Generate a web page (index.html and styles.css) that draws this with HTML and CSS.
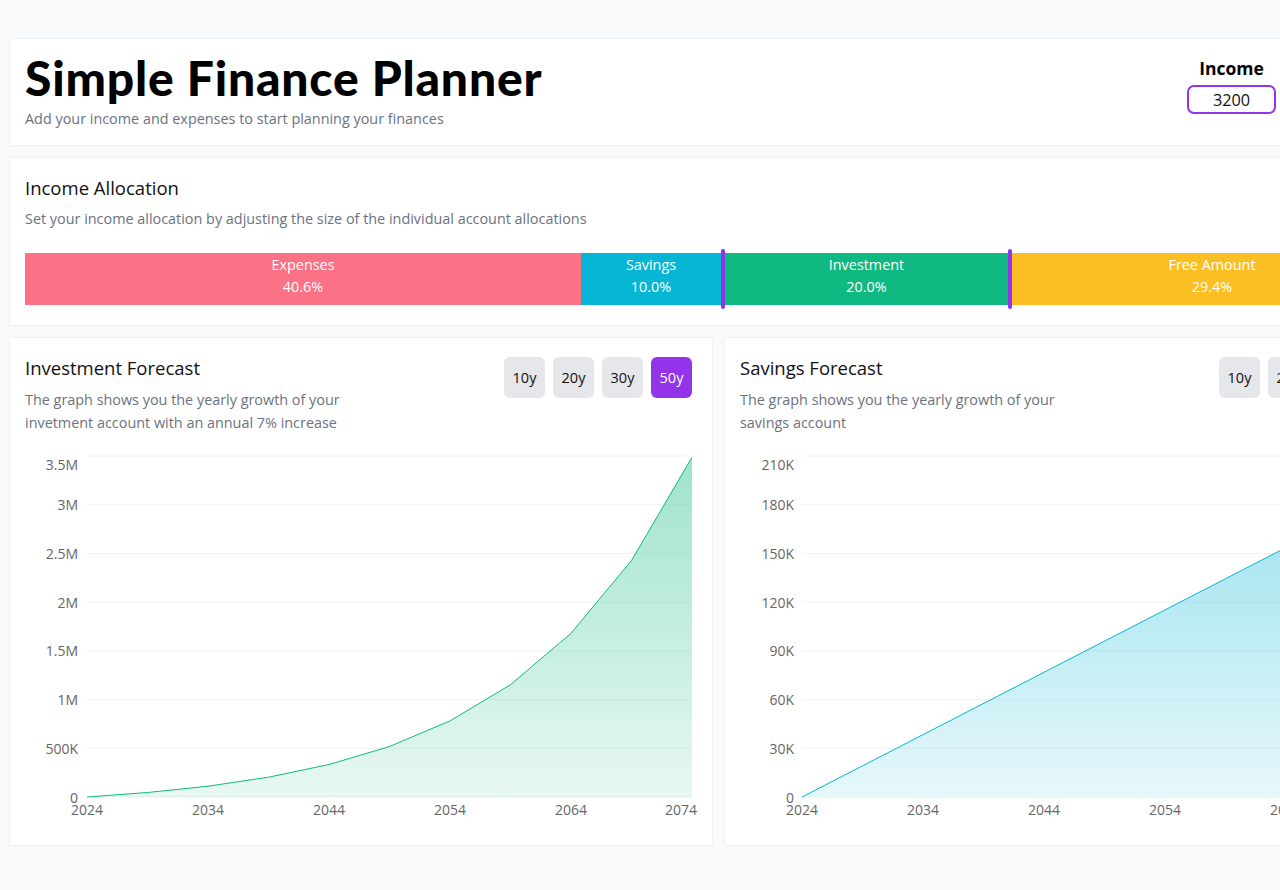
FILE: index.html
```html
<!DOCTYPE html>
<html lang="en">
<head>
<meta charset="utf-8">
<title>Simple Finance Planner</title>
<link rel="stylesheet" href="styles.css">
</head>
<body>
<div class="page">
  <header class="card header">
    <div class="titles">
      <h1 class="title">Simple Finance Planner</h1>
      <p class="subtitle">Add your income and expenses to start planning your finances</p>
    </div>
    <div class="income">
      <label class="income-label" for="income">Income</label>
      <input id="income" class="income-input" type="text" value="3200">
    </div>
  </header>

  <section class="card allocation">
    <h2 class="card-title">Income Allocation</h2>
    <p class="card-desc">Set your income allocation by adjusting the size of the individual account allocations</p>
    <div class="bar">
      <div class="seg seg-expenses" style="flex-basis:556px"><span>Expenses</span><span>40.6%</span></div>
      <div class="seg seg-savings" style="flex-basis:140px"><span>Savings</span><span>10.0%</span></div>
      <div class="handle"></div>
      <div class="seg seg-investment" style="flex-basis:283px"><span>Investment</span><span>20.0%</span></div>
      <div class="handle"></div>
      <div class="seg seg-free" style="flex-basis:400px"><span>Free Amount</span><span>29.4%</span></div>
    </div>
  </section>

  <div class="forecasts">
    <section class="card forecast">
      <div class="forecast-head">
        <div class="forecast-text">
          <h2 class="card-title">Investment Forecast</h2>
          <p class="card-desc forecast-desc">The graph shows you the yearly growth of your invetment account with an annual 7% increase</p>
        </div>
        <div class="ranges">
          <button class="range">10y</button>
          <button class="range">20y</button>
          <button class="range">30y</button>
          <button class="range active">50y</button>
        </div>
      </div>
      <svg class="chart" width="667" height="390" viewBox="0 0 667 390">
        <defs>
          <linearGradient id="gInv" x1="0" y1="0" x2="0" y2="1">
            <stop offset="0%" stop-color="#10b981" stop-opacity="0.4"/>
            <stop offset="100%" stop-color="#10b981" stop-opacity="0.1"/>
          </linearGradient>
        </defs>
        <g class="grid">
          <line x1="62" x2="667" y1="16" y2="16"/>
          <line x1="62" x2="667" y1="64.7" y2="64.7"/>
          <line x1="62" x2="667" y1="113.4" y2="113.4"/>
          <line x1="62" x2="667" y1="162.1" y2="162.1"/>
          <line x1="62" x2="667" y1="210.9" y2="210.9"/>
          <line x1="62" x2="667" y1="259.6" y2="259.6"/>
          <line x1="62" x2="667" y1="308.3" y2="308.3"/>
          <line x1="62" x2="667" y1="357" y2="357"/>
        </g>
        <path class="area-inv" d="M62,357 L122.5,352.5 L183,346.2 L243.5,337.2 L304,324.5 L364.5,306.5 L425,280.9 L485.5,244.7 L546,193.3 L606.5,120.5 L667,17.3 L667,357 Z"/>
        <path class="line-inv" d="M62,357 L122.5,352.5 L183,346.2 L243.5,337.2 L304,324.5 L364.5,306.5 L425,280.9 L485.5,244.7 L546,193.3 L606.5,120.5 L667,17.3"/>
        <g class="ylabels">
          <text x="53" y="30">3.5M</text>
          <text x="53" y="70.2">3M</text>
          <text x="53" y="118.9">2.5M</text>
          <text x="53" y="167.6">2M</text>
          <text x="53" y="216.4">1.5M</text>
          <text x="53" y="265.1">1M</text>
          <text x="53" y="313.8">500K</text>
          <text x="53" y="362.5">0</text>
        </g>
        <g class="xlabels">
          <text x="62" y="375">2024</text>
          <text x="183" y="375">2034</text>
          <text x="304" y="375">2044</text>
          <text x="425" y="375">2054</text>
          <text x="546" y="375">2064</text>
          <text x="656" y="375">2074</text>
        </g>
      </svg>
    </section>

    <section class="card forecast">
      <div class="forecast-head">
        <div class="forecast-text">
          <h2 class="card-title">Savings Forecast</h2>
          <p class="card-desc forecast-desc">The graph shows you the yearly growth of your savings account</p>
        </div>
        <div class="ranges">
          <button class="range">10y</button>
          <button class="range">20y</button>
          <button class="range">30y</button>
          <button class="range active">50y</button>
        </div>
      </div>
      <svg class="chart" width="667" height="390" viewBox="0 0 667 390">
        <defs>
          <linearGradient id="gSav" x1="0" y1="0" x2="0" y2="1">
            <stop offset="0%" stop-color="#06b6d4" stop-opacity="0.4"/>
            <stop offset="100%" stop-color="#06b6d4" stop-opacity="0.1"/>
          </linearGradient>
        </defs>
        <g class="grid">
          <line x1="62" x2="667" y1="16" y2="16"/>
          <line x1="62" x2="667" y1="64.7" y2="64.7"/>
          <line x1="62" x2="667" y1="113.4" y2="113.4"/>
          <line x1="62" x2="667" y1="162.1" y2="162.1"/>
          <line x1="62" x2="667" y1="210.9" y2="210.9"/>
          <line x1="62" x2="667" y1="259.6" y2="259.6"/>
          <line x1="62" x2="667" y1="308.3" y2="308.3"/>
          <line x1="62" x2="667" y1="357" y2="357"/>
        </g>
        <path class="area-sav" d="M62,357 L667,45.2 L667,357 Z"/>
        <path class="line-sav" d="M62,357 L667,45.2"/>
        <g class="ylabels">
          <text x="54" y="30">210K</text>
          <text x="54" y="70.2">180K</text>
          <text x="54" y="118.9">150K</text>
          <text x="54" y="167.6">120K</text>
          <text x="54" y="216.4">90K</text>
          <text x="54" y="265.1">60K</text>
          <text x="54" y="313.8">30K</text>
          <text x="54" y="362.5">0</text>
        </g>
        <g class="xlabels">
          <text x="62" y="375">2024</text>
          <text x="183" y="375">2034</text>
          <text x="304" y="375">2044</text>
          <text x="425" y="375">2054</text>
          <text x="546" y="375">2064</text>
          <text x="656" y="375">2074</text>
        </g>
      </svg>
    </section>
  </div>
</div>
</body>
</html>
```

FILE: styles.css
```css
* { box-sizing: border-box; }

html, body {
  margin: 0;
  padding: 0;
  background: #f9fafb;
}

body {
  font-family: "Open Sans", "Noto Sans", "Liberation Sans", sans-serif;
  color: #111;
  font-size: 14.4px;
}

.page {
  width: 1437px;
  padding: 39px 10px 40px;
  display: flex;
  flex-direction: column;
  gap: 13px;
}

.card {
  background: #fff;
  box-shadow: 0 0 0 1px #f1f2f4, 0 1px 2px rgba(0, 0, 0, 0.04);
}

/* header */
.header {
  display: flex;
  justify-content: space-between;
  align-items: flex-start;
  padding: 15px 15px 16px;
}

.title {
  margin: 0;
  font-family: "Lato", "Open Sans", sans-serif;
  font-size: 48px;
  line-height: 48px;
  font-weight: 900;
  color: #000;
  letter-spacing: 0.8px;
}

.subtitle {
  margin: 7px 0 0;
  font-size: 14.4px;
  line-height: 20px;
  color: #6b7280;
}

.income {
  display: flex;
  flex-direction: column;
  align-items: center;
  width: 89px;
  margin-right: 136px;
}

.income-label {
  font-size: 17.5px;
  line-height: 28px;
  font-weight: 700;
  color: #000;
}

.income-input {
  margin-top: 3px;
  width: 89px;
  height: 29px;
  border: 2px solid #9333ea;
  border-radius: 7px;
  text-align: center;
  font-family: inherit;
  font-size: 16.3px;
  color: #111;
  padding: 0;
  outline: none;
  background: #fff;
}

/* allocation */
.allocation {
  padding: 16px 15px 20px;
}

.card-title {
  margin: 0;
  font-size: 18.5px;
  line-height: 28px;
  font-weight: 500;
  color: #111;
}

.card-desc {
  margin: 7px 0 0;
  font-size: 14.4px;
  line-height: 20px;
  color: #6b7280;
}

.bar {
  margin-top: 24px;
  display: flex;
  height: 52px;
}

.seg {
  flex-grow: 0;
  flex-shrink: 0;
  display: flex;
  flex-direction: column;
  align-items: center;
  padding-top: 1px;
  color: #fff;
  font-size: 14.4px;
  line-height: 22px;
}

.seg-expenses { background: #fb7185; }
.seg-savings { background: #06b6d4; }
.seg-investment { background: #10b981; }
.seg-free { background: #fbbf24; }

.handle {
  flex: 0 0 4px;
  margin: -4px 0;
  background: #9333ea;
  border-radius: 2px;
}

/* forecasts */
.forecasts {
  display: grid;
  grid-template-columns: 702px 702px;
  gap: 13px;
}

.forecast {
  padding: 16px 20px 15px 15px;
}

.forecast-head {
  display: flex;
  justify-content: space-between;
  align-items: flex-start;
}

.forecast-desc {
  width: 340px;
  margin-top: 6px;
  line-height: 23px;
}

.ranges {
  display: flex;
  gap: 8px;
  margin-top: 3px;
}

.range {
  width: 41px;
  height: 41px;
  border: none;
  border-radius: 6px;
  background: #e5e7eb;
  color: #111;
  font-family: inherit;
  font-size: 14.5px;
  padding: 0;
}

.range.active {
  background: #9333ea;
  color: #fff;
}

.chart {
  display: block;
  margin-top: 6px;
  overflow: visible;
}

.grid line {
  stroke: #f2f2f2;
  stroke-width: 1;
}

.area-inv { fill: url(#gInv); }
.line-inv { fill: none; stroke: #10b981; stroke-width: 1; }
.area-sav { fill: url(#gSav); }
.line-sav { fill: none; stroke: #06b6d4; stroke-width: 1; }

.ylabels text {
  text-anchor: end;
  font-size: 14px;
  fill: #666;
}

.xlabels text {
  text-anchor: middle;
  font-size: 14px;
  fill: #666;
}
```
